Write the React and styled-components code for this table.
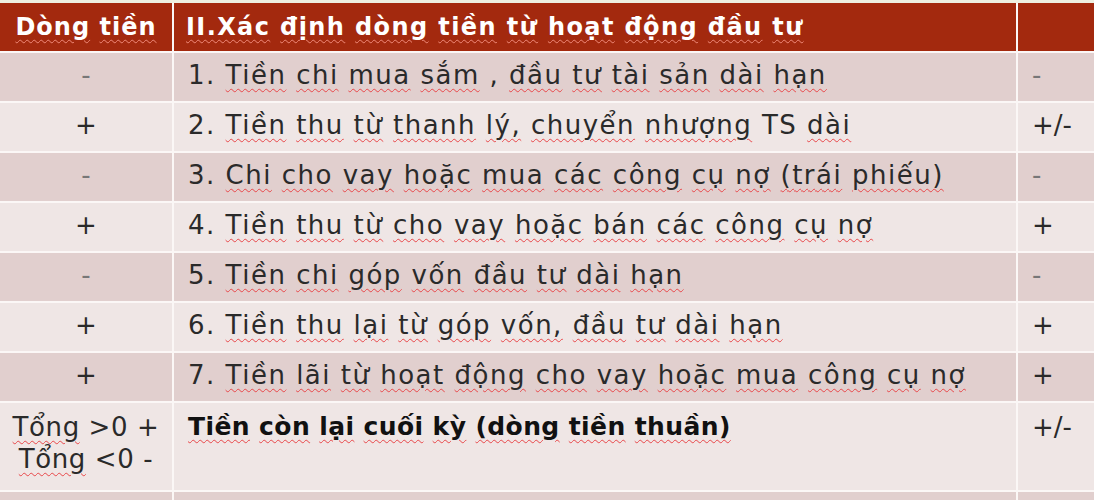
import styled, { createGlobalStyle } from "styled-components";

const GlobalStyle = createGlobalStyle`
  html, body {
    margin: 0;
    padding: 0;
    background: #f7f3ee;
  }
  body {
    font-family: "DejaVu Sans", "Liberation Sans", sans-serif;
  }
`;

const Page = styled.div`
  width: 1094px;
  height: 500px;
  overflow: hidden;
  background: #eeefe0;
  padding-top: 3px;
  box-sizing: border-box;
`;

const Table = styled.div`
  display: grid;
  grid-template-columns: 172px 842px 1fr;
  grid-template-rows: 48px repeat(7, 48px) 87px 48px;
  gap: 2px;
  background: #fbf7f6;
`;

const HeadCell = styled.div`
  background: #a3290e;
  color: #ffffff;
  font-weight: bold;
  font-size: 24px;
  letter-spacing: ${(p) => (p.$center ? "1px" : "1.4px")};
  display: flex;
  align-items: center;
  justify-content: ${(p) => (p.$center ? "center" : "flex-start")};
  padding: 0 ${(p) => (p.$center ? "0" : "12px")};
  white-space: nowrap;
`;

const Cell = styled.div`
  background: ${(p) => (p.$dark ? "#e1cfce" : "#efe6e5")};
  color: #2a2a2a;
  font-size: 26px;
  letter-spacing: ${(p) => (p.$center ? "0.6px" : "1.5px")};
  display: flex;
  flex-direction: column;
  justify-content: ${(p) => (p.$top ? "flex-start" : "center")};
  align-items: ${(p) => (p.$center ? "center" : "flex-start")};
  padding: ${(p) => (p.$top ? "8px" : "0")} ${(p) => (p.$center ? "0" : "14px")} 0;
  padding-bottom: 4px;
  white-space: nowrap;
  line-height: ${(p) => (p.$top ? "32px" : "normal")};
  box-sizing: border-box;
`;

const SignText = styled.span`
  color: ${(p) => (p.$muted ? "#777" : "#2a2a2a")};
  letter-spacing: 0;
`;

const Strong = styled.span`
  font-family: "DejaVu Sans", "Liberation Sans", sans-serif;
  font-weight: bold;
  font-size: 25px;
  letter-spacing: 0.4px;
  color: #111;
`;

const Squiggle = styled.span`
  text-decoration: underline wavy ${(p) => (p.$light ? "#f08a7a" : "#e8474a")};
  text-decoration-thickness: 1px;
  text-underline-offset: 4px;
`;

function Words({ text, light }) {
  const parts = text.split(/(\s+)/);
  return (
    <span>
      {parts.map((w, i) => {
        if (/^\s+$/.test(w) || !/[a-zA-Zà-ỹÀ-Ỹđ]/.test(w) || w === "TS" || /^\d/.test(w)) {
          return <span key={i}>{w}</span>;
        }
        return (
          <Squiggle key={i} $light={light}>
            {w}
          </Squiggle>
        );
      })}
    </span>
  );
}

const rows = [
  ["-", "1. Tiền chi mua sắm , đầu tư tài sản dài hạn", "-"],
  ["+", "2. Tiền thu từ thanh lý, chuyển nhượng TS dài", "+/-"],
  ["-", "3. Chi cho vay hoặc mua các công cụ nợ (trái phiếu)", "-"],
  ["+", "4. Tiền thu từ cho vay hoặc bán các công cụ nợ", "+"],
  ["-", "5. Tiền chi góp vốn đầu tư dài hạn", "-"],
  ["+", "6. Tiền thu lại từ góp vốn, đầu tư dài hạn", "+"],
  ["+", "7. Tiền lãi từ hoạt động cho vay hoặc mua công cụ nợ", "+"],
];

export default function App() {
  return (
    <>
      <GlobalStyle />
      <Page>
        <Table>
          <HeadCell $center>
            <Words text="Dòng tiền" light />
          </HeadCell>
          <HeadCell>
            <Words text="II.Xác định dòng tiền từ hoạt động đầu tư" light />
          </HeadCell>
          <HeadCell />
          {rows.map(([left, mid, right], i) => {
            const dark = i % 2 === 0;
            return [
              <Cell key={`l${i}`} $dark={dark} $center>
                <SignText $muted={left === "-"}>{left}</SignText>
              </Cell>,
              <Cell key={`m${i}`} $dark={dark}>
                <Words text={mid} />
              </Cell>,
              <Cell key={`r${i}`} $dark={dark}>
                <SignText $muted={right === "-"}>{right}</SignText>
              </Cell>,
            ];
          })}
          <Cell $top $center>
            <span>
              <Words text="Tổng" /> &gt;0 +
            </span>
            <span>
              <Words text="Tổng" /> &lt;0 -
            </span>
          </Cell>
          <Cell $top>
            <Strong>
              <Words text="Tiền còn lại cuối kỳ (dòng tiền thuần)" />
            </Strong>
          </Cell>
          <Cell $top>
            <SignText>+/-</SignText>
          </Cell>
          <Cell $dark />
          <Cell $dark />
          <Cell $dark />
        </Table>
      </Page>
    </>
  );
}
